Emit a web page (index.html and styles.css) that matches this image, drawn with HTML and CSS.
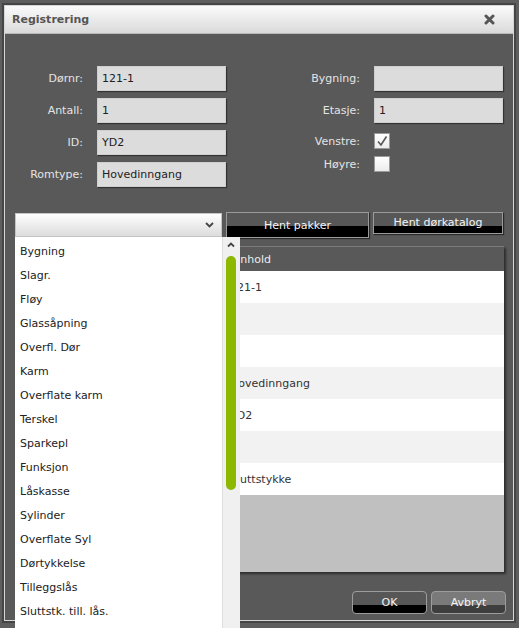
FILE: index.html
```html
<!DOCTYPE html>
<html lang="no">
<head>
<meta charset="utf-8">
<title>Registrering</title>
<link rel="stylesheet" href="styles.css">
</head>
<body>
<div class="dialog">
  <div class="titlebar">
    <span class="title">Registrering</span>
    <svg class="close" width="11" height="11" viewBox="0 0 11 11"><path d="M2 2 L9 9 M9 2 L2 9" stroke="#555" stroke-width="3" stroke-linecap="round"/></svg>
  </div>
  <div class="content">
    <div class="form">
      <div class="col col-left">
        <div class="row"><label class="lbl">Dørnr:</label><div class="input">121-1</div></div>
        <div class="row"><label class="lbl">Antall:</label><div class="input">1</div></div>
        <div class="row"><label class="lbl">ID:</label><div class="input">YD2</div></div>
        <div class="row"><label class="lbl">Romtype:</label><div class="input">Hovedinngang</div></div>
      </div>
      <div class="col col-right">
        <div class="row"><label class="lbl">Bygning:</label><div class="input"></div></div>
        <div class="row"><label class="lbl">Etasje:</label><div class="input">1</div></div>
        <div class="row check-row first-check"><label class="lbl">Venstre:</label><span class="checkbox"><svg width="14" height="14" viewBox="0 0 14 14"><path d="M3 7.5 L6 11 L11.5 2.5" fill="none" stroke="#555" stroke-width="1.6"/></svg></span></div>
        <div class="row check-row"><label class="lbl">Høyre:</label><span class="checkbox"></span></div>
      </div>
    </div>

    <div class="toolbar">
      <div class="select-wrap">
        <div class="select">
          <svg class="chev" width="9" height="6" viewBox="0 0 9 6"><path d="M1 1 L4.5 4.5 L8 1" fill="none" stroke="#444" stroke-width="1.8"/></svg>
        </div>
        <div class="dropdown">
          <ul class="options">
            <li>Bygning</li>
            <li>Slagr.</li>
            <li>Fløy</li>
            <li>Glassåpning</li>
            <li>Overfl. Dør</li>
            <li>Karm</li>
            <li>Overflate karm</li>
            <li>Terskel</li>
            <li>Sparkepl</li>
            <li>Funksjon</li>
            <li>Låskasse</li>
            <li>Sylinder</li>
            <li>Overflate Syl</li>
            <li>Dørtykkelse</li>
            <li>Tilleggslås</li>
            <li>Sluttstk. till. lås.</li>
          </ul>
          <div class="scrollbar">
            <svg class="up" width="8" height="6" viewBox="0 0 8 6"><path d="M1 4.5 L4 1.5 L7 4.5" fill="none" stroke="#444" stroke-width="1.8"/></svg>
            <div class="thumb"></div>
          </div>
        </div>
      </div>
      <button class="btn btn-pakker">Hent pakker</button>
      <button class="btn btn-katalog">Hent dørkatalog</button>
    </div>

    <div class="grid">
      <table class="table">
        <thead>
          <tr><th class="c1"></th><th class="c2">Innhold</th></tr>
        </thead>
        <tbody>
          <tr><td class="c1"></td><td class="c2">121-1</td></tr>
          <tr class="alt"><td class="c1"></td><td class="c2"></td></tr>
          <tr><td class="c1"></td><td class="c2"></td></tr>
          <tr class="alt"><td class="c1"></td><td class="c2">Hovedinngang</td></tr>
          <tr><td class="c1"></td><td class="c2">YD2</td></tr>
          <tr class="alt"><td class="c1"></td><td class="c2"></td></tr>
          <tr><td class="c1"></td><td class="c2">Sluttstykke</td></tr>
        </tbody>
      </table>
    </div>

    <div class="footer">
      <button class="fbtn ok">OK</button>
      <button class="fbtn cancel">Avbryt</button>
    </div>
  </div>
</div>
</body>
</html>
```
FILE: styles.css
```css
html, body {
  margin: 0;
  padding: 0;
  overflow: hidden;
  height: 100%;
}
body {
  background: #5e5e5e;
  font-family: "DejaVu Sans", Verdana, sans-serif;
  font-size: 11px;
}
.dialog {
  margin: 5px 0 0 4px;
  width: 508px;
  height: 614px;
  border: 1px solid #d6d6d6;
  background: #595959;
  box-shadow: 0 0 0 2px #454545;
  position: relative;
}
.titlebar {
  height: 27px;
  border-bottom: 1px solid #b9b9b9;
  background: linear-gradient(#fbfbfb, #dadada);
  display: flex;
  align-items: center;
  justify-content: space-between;
  padding: 0 18px 0 7px;
}
.title {
  font-weight: bold;
  color: #555;
  font-size: 11px;
}
.close { display: block; }
.content {
  padding: 32px 9px 0 10px;
}
.form {
  display: flex;
}
.col {
  display: flex;
  flex-direction: column;
  gap: 7px;
}
.col-left { width: 211px; }
.col-right { width: 277px; }
.row {
  display: flex;
  align-items: center;
  height: 25px;
}
.lbl {
  color: #e4e4e4;
  text-align: right;
  margin-right: 14px;
}
.col-left .lbl { width: 68px; }
.col-right .lbl { flex: 1; }
.input {
  box-sizing: border-box;
  width: 129px;
  height: 25px;
  background: #dcdcdc;
  border: 1px solid #cfcfcf;
  box-shadow: 1px 1px 1px #333;
  color: #222;
  padding-left: 4px;
  line-height: 23px;
}
.check-row {
  height: 16px;
  padding-right: 113px;
}
.first-check { margin-top: 3px; }
.checkbox {
  box-sizing: border-box;
  width: 16px;
  height: 16px;
  background: linear-gradient(#ffffff, #ececec);
  border: 1px solid #9a9a9a;
  display: flex;
  align-items: center;
  justify-content: center;
}
.checkbox svg { display: block; }

.toolbar {
  margin-top: 25px;
  display: flex;
  align-items: flex-start;
  gap: 4px;
}
.select-wrap {
  position: relative;
  width: 207px;
  margin-top: 1px;
  z-index: 5;
}
.select {
  box-sizing: border-box;
  height: 24px;
  background: linear-gradient(#fefefe, #dcdcdc);
  border: 1px solid #c4c4c4;
  display: flex;
  align-items: center;
  justify-content: flex-end;
  padding-right: 7px;
}
.chev { display: block; }
.dropdown {
  position: absolute;
  top: 24px;
  left: 0;
  width: 225px;
  height: 420px;
  background: #fff;
}
.options {
  list-style: none;
  margin: 0;
  padding: 3px 0 0 0;
  width: 207px;
}
.options li {
  height: 24px;
  line-height: 24px;
  padding-left: 5px;
  color: #222;
}
.scrollbar {
  position: absolute;
  top: 0;
  right: 0;
  width: 17px;
  height: 100%;
  background: #f0f0f0;
  border-left: 1px solid #dedede;
}
.up {
  display: block;
  margin: 5px 0 0 4px;
}
.thumb {
  margin: 8px 0 0 3px;
  width: 10px;
  height: 234px;
  border-radius: 5px;
  background: #8cb800;
}
.btn {
  box-sizing: border-box;
  border: 1px solid #9a9a9a;
  color: #f4f4f4;
  font-family: "DejaVu Sans", Verdana, sans-serif;
  font-size: 11px;
  padding: 0;
  background: linear-gradient(#575757 0, #575757 13px, #000 13px, #000 100%);
  box-shadow: 1px 1px 1px #2a2a2a;
}
.btn-pakker {
  width: 143px;
  height: 26px;
  line-height: 26px;
}
.btn-katalog {
  width: 130px;
  height: 22px;
  line-height: 20px;
}

.grid {
  margin-top: 8px;
  height: 325px;
  background: #c0c0c0;
  border-top: 1px solid #7c7c7c;
  box-shadow: 2px 2px 2px #2e2e2e;
}
.table {
  width: 100%;
  border-collapse: collapse;
  table-layout: fixed;
}
.table th {
  height: 24px;
  padding: 0 0 0 5px;
  text-align: left;
  font-weight: normal;
  color: #ececec;
  background: #595959;
}
.table td {
  height: 32px;
  padding: 0 0 0 5px;
  color: #333;
  background: #fff;
}
.table .alt td { background: #f2f2f2; }
.table .c1 { width: 205px; }

.footer {
  margin-top: 19px;
  margin-right: -2px;
  display: flex;
  justify-content: flex-end;
  gap: 4px;
}
.fbtn {
  box-sizing: border-box;
  width: 75px;
  height: 23px;
  border: 1px solid #9c9c9c;
  border-radius: 4px;
  color: #f4f4f4;
  font-family: "DejaVu Sans", Verdana, sans-serif;
  font-size: 11px;
  padding: 0;
  line-height: 20px;
}
.ok {
  background: linear-gradient(#575757 0, #575757 13px, #000 13px, #000 100%);
}
.cancel {
  background: linear-gradient(#7a7a7a 0, #7a7a7a 13px, #3e3e3e 13px, #3e3e3e 100%);
}
```
